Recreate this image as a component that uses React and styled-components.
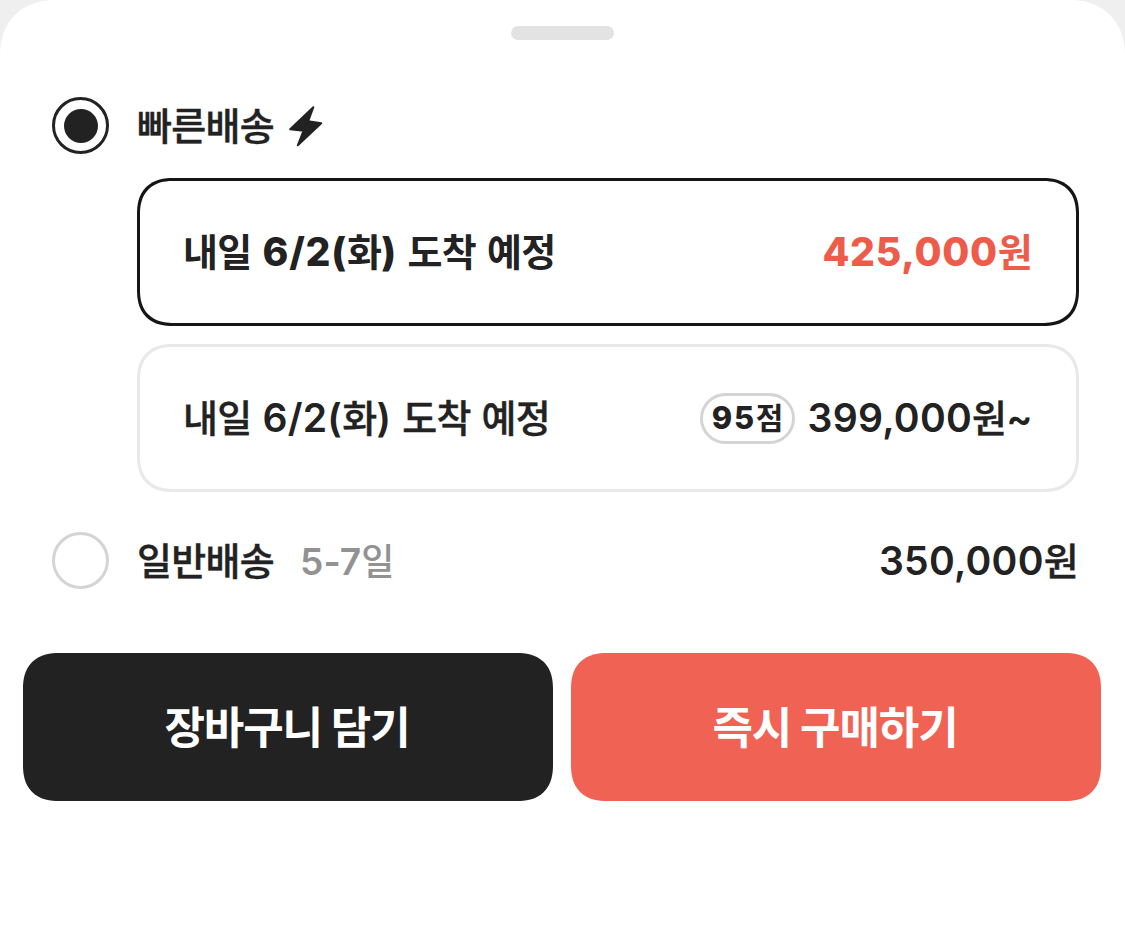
import styled, { createGlobalStyle } from "styled-components";

const App = () => {
  return (
    <>
      <GlobalStyle />
      <Sheet>
        <Handle />
        <OptionRow>
          <Radio $checked />
          <Label>빠른배송</Label>
          <BoltIcon viewBox="0 0 36 42">
            <path d="M25.3 2.2 L2.2 24.2 L15.5 25.8 L9.8 40.3 L33.2 18.2 L20.2 16.2 Z" />
          </BoltIcon>
        </OptionRow>
        <Cards>
          <Card $selected>
            <Text $bold>
              내일 <Num $bold $spacing="0.8px">6/2(</Num>화<Num $bold>)</Num> 도착 예정
            </Text>
            <Text $bold $color="#ed5c4b">
              <Num $bold $spacing="0.7px">425,000</Num>원
            </Text>
          </Card>
          <Card>
            <Text>
              내일 <Num>6/2(</Num>화<Num>)</Num> 도착 예정
            </Text>
            <Price>
              <Badge>
                <Num $bold $spacing="1.8px">95</Num>점
              </Badge>
              <Text>
                <Num>399,000</Num>원<Num $spacing="-0.6px">~</Num>
              </Text>
            </Price>
          </Card>
        </Cards>
        <OptionRow>
          <Radio />
          <Label>일반배송</Label>
          <Days>
            <Num $spacing="0.1px">5-7</Num>일
          </Days>
          <Total>
            <Num>350,000</Num>원
          </Total>
        </OptionRow>
        <Actions>
          <ActionButton $bg="#222222">장바구니 담기</ActionButton>
          <ActionButton $bg="#f06253">즉시 구매하기</ActionButton>
        </Actions>
      </Sheet>
    </>
  );
};

const GlobalStyle = createGlobalStyle`
  * {
    box-sizing: border-box;
  }
  body {
    margin: 0;
    background: #efefef;
    color: #222222;
    font-family: "Noto Sans CJK KR", sans-serif;
  }
`;

const Sheet = styled.main`
  display: flex;
  flex-direction: column;
  height: 925px;
  padding-top: 26px;
  background: #ffffff;
  border-radius: 56px 56px 0 0;
  corner-shape: superellipse(1.15);
`;

const Handle = styled.div`
  align-self: center;
  width: 103px;
  height: 14px;
  margin-bottom: 57px;
  border-radius: 7px;
  background: #e3e3e3;
`;

// one delivery method
const OptionRow = styled.div`
  display: flex;
  align-items: center;
  height: 57px;
  padding: 0 46px 0 52px;
`;
const Radio = styled.span`
  display: grid;
  place-items: center;
  width: 57px;
  height: 57px;
  margin-right: 28px;
  border: 3px solid ${({ $checked }) => ($checked ? "#222222" : "#d4d4d4")};
  border-radius: 50%;

  &::before {
    content: "";
    width: 34px;
    height: 34px;
    border-radius: 50%;
    background: ${({ $checked }) => ($checked ? "#222222" : "transparent")};
  }
`;
const Text = styled.span`
  padding-bottom: 3px;
  font-size: 38px;
  line-height: 56px;
  font-weight: ${({ $bold }) => ($bold ? 700 : 500)};
  letter-spacing: -0.7px;
  word-spacing: 3px;
  white-space: nowrap;
  color: ${({ $color }) => $color || "inherit"};
  -webkit-text-stroke: ${({ $bold }) => ($bold ? "0" : "0.4px")};
`;
const Label = styled(Text)`
  padding-bottom: 4px;
`;
const Days = styled(Text)`
  padding-bottom: 1px;
  margin-left: 26px;
  font-size: 36px;
  color: #929292;
  -webkit-text-stroke: 0;
`;
const Total = styled(Text)`
  padding-bottom: 1px;
  margin-left: auto;
  margin-right: 1px;
`;
const Num = styled.span`
  font-family: Inter, sans-serif;
  font-size: 1.03em;
  font-weight: ${({ $bold }) => ($bold ? 800 : 600)};
  letter-spacing: ${({ $spacing }) => $spacing || "0.25px"};
  -webkit-text-stroke: 0;
`;
const BoltIcon = styled.svg`
  width: 36px;
  height: 42px;
  margin-left: 14px;
  fill: #222222;
  stroke: #222222;
  stroke-width: 2;
  stroke-linejoin: round;
`;

// arrival choices
const Cards = styled.div`
  display: flex;
  flex-direction: column;
  gap: 18px;
  padding: 24px 46px 40px 137px;
`;
const Card = styled.div`
  display: flex;
  align-items: center;
  justify-content: space-between;
  height: 148px;
  padding: 0 44px 0 43px;
  border: 3px solid ${({ $selected }) => ($selected ? "#151515" : "#e9e9e9")};
  border-radius: 36px;
  corner-shape: superellipse(1.25);
`;
const Price = styled.div`
  display: flex;
  align-items: center;
  gap: 13px;
`;
const Badge = styled.span`
  width: 95px;
  height: 51px;
  border: 3px solid #d4d4d4;
  border-radius: 26px;
  font-size: 30px;
  line-height: 41px;
  font-weight: 700;
  letter-spacing: -1px;
  text-align: center;
`;

const Actions = styled.div`
  display: grid;
  grid-template-columns: 1fr 1fr;
  gap: 18px;
  padding: 64px 24px 0 23px;
`;
const ActionButton = styled.button`
  height: 148px;
  padding: 0 2px 5px 0;
  border: none;
  border-radius: 36px;
  corner-shape: superellipse(1.25);
  background: ${({ $bg }) => $bg};
  color: #ffffff;
  font-family: inherit;
  font-size: 44px;
  font-weight: 700;
  letter-spacing: -1.1px;
`;

export default App;
